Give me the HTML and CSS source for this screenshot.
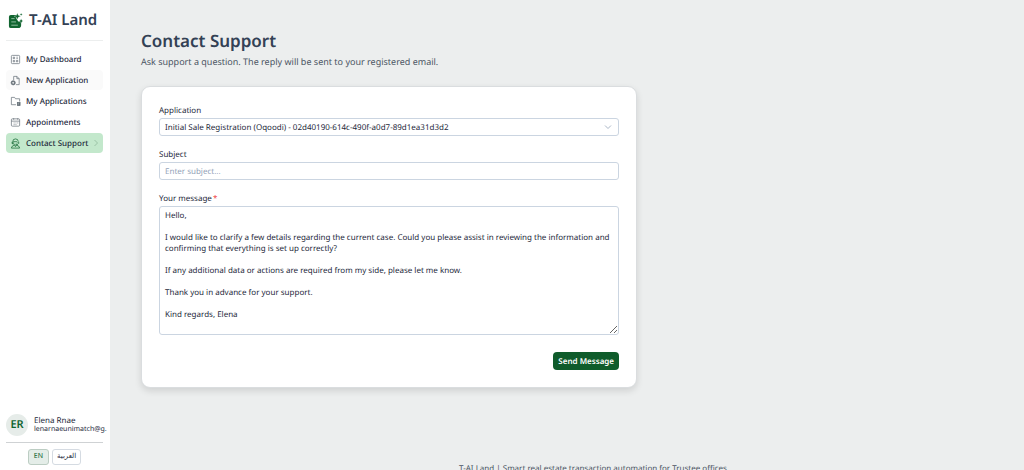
FILE: index.html
```html
<!DOCTYPE html>
<html lang="en">
<head>
<meta charset="utf-8">
<title>Contact Support - T-AI Land</title>
<link rel="stylesheet" href="styles.css">
</head>
<body>
<div class="app">
  <aside class="sidebar">
    <a class="brand" href="#">
      <svg class="brand-icon" viewBox="0 0 16 18" aria-hidden="true">
        <path d="M3 3h6v4l2 3h3v4q0 3-3 3H3q-2 0-2-2V5q0-2 2-2z" fill="#116530"/>
        <path d="M3.500 7H7M3.500 10.500h5M3.500 14h7" stroke="#b5d8c1" stroke-width=".8" fill="none"/>
        <path d="M10 1l1 2.500 2.500 1-2.500 1-1 2.500-1-2.500-2.500-1 2.500-1zM14 7l.8 1.700 1.200.8-1.200.8-.8 1.700-.8-1.700-1.200-.8 1.200-.8zM14 1l.5 1 1 .5-1 .5-.5 1-.5-1-1-.5 1-.5z" fill="#116530" stroke="#fff" stroke-width=".3"/>
      </svg>
      <span>T-AI Land</span>
    </a>
    <nav class="nav">
      <a class="nav-item" href="#">
        <svg class="icon" viewBox="0 0 12 12" aria-hidden="true"><rect x="1.500" y="1.500" width="9" height="9" rx="1"/><path d="M3.500 3.500h1.500v1.500H3.500zM7 3.500h1.500M7 5h1.500M3.500 7h1.500v1.500H3.500zM7 7h1.500v1.500H7z"/></svg>
        <span>My Dashboard</span>
      </a>
      <a class="nav-item hovered" href="#">
        <svg class="icon" viewBox="0 0 12 12" aria-hidden="true"><path d="M4 5.500v-4h3.500L10 4v6.500H6.500M7.500 1.500V4H10"/><circle cx="3.500" cy="8.500" r="2.300" fill="#59636b"/><path d="M3.500 7.300v2.400M2.300 8.500h2.400" stroke="#fff"/></svg>
        <span>New Application</span>
      </a>
      <a class="nav-item" href="#">
        <svg class="icon" viewBox="0 0 12 12" aria-hidden="true"><path d="M6.500 9.500h-5v-8H5L6 3h4.500v3"/><rect x="8" y="7" width="3" height="3.500" fill="#59636b"/><path d="M9 8h1M9 9h1" stroke="#fff" stroke-width=".5"/></svg>
        <span>My Applications</span>
      </a>
      <a class="nav-item" href="#">
        <svg class="icon" viewBox="0 0 12 12" aria-hidden="true"><rect x="1.500" y="2" width="9" height="8" rx="1"/><path d="M1.500 4.500h9M4 1.300V3M8.500 1.300V3M4 6.500h1M6 6.500h1M8 6.500h1M4 8.300h1M6 8.300h1"/></svg>
        <span>Appointments</span>
      </a>
      <a class="nav-item active" href="#" aria-current="page">
        <svg class="icon" viewBox="0 0 12 12" aria-hidden="true"><path d="M3 6V4q0-3 3-3t3 3M3.500 4h3q1.500 0 2 1M4 5v1q0 2 2 2t3-2M2.300 4.200v2h1M9.500 4.200v2M1.500 11q.3-2.500 3-3l1.500 1.500L7.500 8q2.700.5 3 3zM6 6.700h2"/></svg>
        <span>Contact Support</span>
        <svg class="chevron" viewBox="0 0 6 8" aria-hidden="true"><path d="M1.500 1L4.500 4 1.500 7"/></svg>
      </a>
    </nav>
    <div class="account">
      <div class="avatar">ER</div>
      <div class="identity">
        <div class="name">Elena Rnae</div>
        <div class="email">lenarnaeunimatch@g.</div>
      </div>
    </div>
    <div class="languages">
      <button class="lang selected" type="button">EN</button>
      <button class="lang" type="button" lang="ar">العربية</button>
    </div>
  </aside>
  <div class="page">
    <main class="content">
      <h1>Contact Support</h1>
      <p class="lead">Ask support a question. The reply will be sent to your registered email.</p>
      <form class="card">
        <div class="field">
          <label for="application">Application</label>
          <div class="select-wrap">
            <select class="control" id="application">
              <option>Initial Sale Registration (Oqoodi) - 02d40190-614c-490f-a0d7-89d1ea31d3d2</option>
            </select>
            <svg class="arrow" viewBox="0 0 8 6" aria-hidden="true"><path d="M1 1.500l3 3 3-3"/></svg>
          </div>
        </div>
        <div class="field">
          <label for="subject">Subject</label>
          <input class="control" id="subject" type="text" placeholder="Enter subject...">
        </div>
        <div class="field">
          <label for="message">Your message<span class="required">*</span></label>
          <textarea class="control message" id="message" rows="11" required>Hello,

I would like to clarify a few details regarding the current case. Could you please assist in reviewing the information and confirming that everything is set up correctly?

If any additional data or actions are required from my side, please let me know.

Thank you in advance for your support.

Kind regards, Elena</textarea>
        </div>
        <button class="send" type="button">Send Message</button>
      </form>
    </main>
    <footer class="footer">T-AI Land | Smart real estate transaction automation for Trustee offices</footer>
  </div>
</div>
</body>
</html>
```
FILE: styles.css
```css
* {
  box-sizing: border-box;
}

body {
  margin: 0;
  font: 8px/11px "Noto Sans", sans-serif;
  color: #1e293b;
  background: #eceeee;
  text-rendering: geometricPrecision;
}

button,
input,
select,
textarea {
  font: inherit;
  color: inherit;
  text-rendering: inherit;
}

a {
  color: inherit;
  text-decoration: none;
}

.app {
  display: flex;
  height: 100vh;
  overflow: hidden;
}

.sidebar {
  display: flex;
  flex-direction: column;
  flex: 0 0 110px;
  min-width: 0;
  padding: 0 7px 5px 6px;
  background: #fff;
}

.brand {
  display: flex;
  align-items: center;
  gap: 6px;
  height: 41px;
  padding: 1px 0 0 2px;
  border-bottom: 1px solid #eceeee;
  font-size: 15px;
  font-weight: 600;
  color: #334155;
  white-space: nowrap;
}

.brand-icon {
  width: 15px;
  height: 17px;
  flex: none;
}

.nav {
  display: flex;
  flex-direction: column;
  gap: 1px;
  padding-top: 8px;
}

.nav-item {
  display: flex;
  align-items: center;
  gap: 5px;
  height: 20px;
  padding: 0 6px 0 4px;
  border-radius: 4px;
  font-weight: 500;
  white-space: nowrap;
}

.nav-item.hovered {
  background: #fafafa;
}

.nav-item.active {
  background: #c3e8cc;
}

.icon {
  width: 11px;
  height: 11px;
  flex: none;
  fill: none;
  stroke: #69737b;
  stroke-width: 0.8;
}

.active .icon {
  stroke: #116530;
}

.chevron {
  width: 6px;
  height: 8px;
  flex: none;
  margin-left: auto;
  fill: none;
  stroke: #8fb99a;
  stroke-width: 0.8;
}

.account {
  display: flex;
  align-items: center;
  gap: 6px;
  margin-top: auto;
  padding-bottom: 6px;
  border-bottom: 1px solid #cfd2d4;
}

.avatar {
  flex: none;
  width: 22px;
  height: 22px;
  border-radius: 50%;
  background: #e6ece9;
  color: #116530;
  font-size: 11px;
  font-weight: 600;
  line-height: 22px;
  text-align: center;
}

.identity {
  min-width: 0;
  line-height: 9px;
}

.name {
  font-size: 8px;
}

.email {
  font-size: 7px;
  white-space: nowrap;
}

.languages {
  display: flex;
  justify-content: center;
  gap: 3px;
  padding-top: 6px;
}

.lang {
  height: 16px;
  padding: 0 4px;
  border: 1px solid #d5dbe2;
  border-radius: 3px;
  background: #fff;
  font-size: 7px;
  line-height: 14px;
}

.lang.selected {
  padding: 0 5px;
  border-color: #bccdc3;
  background: #e4ede8;
  color: #116530;
}

.page {
  flex: 1;
  min-width: 0;
  padding: 30px 31px 0;
}

.content {
  max-width: 496px;
}

h1 {
  margin: 0;
  font-size: 17px;
  font-weight: 600;
  line-height: 22px;
  color: #334155;
}

.lead {
  margin: 4px 0 18px;
  font-size: 9px;
  line-height: 12px;
  color: #4b5563;
}

.card {
  display: flex;
  flex-direction: column;
  gap: 13px;
  padding: 18px 17px 17px;
  border: 1px solid #dadddf;
  border-radius: 9px;
  background: #fff;
  box-shadow: 0 3px 7px rgba(0, 0, 0, 0.12);
}

.field {
  display: flex;
  flex-direction: column;
  gap: 2px;
}

.required {
  margin-left: 1px;
  color: #ef4444;
}

.control {
  width: 100%;
  height: 18px;
  margin: 0;
  padding: 0 5px;
  border: 1px solid #cbd5e1;
  border-radius: 3px;
  background: #fff;
  appearance: none;
}

.control::placeholder {
  color: #94a3b8;
}

.select-wrap {
  position: relative;
  display: flex;
}

.arrow {
  position: absolute;
  top: 6px;
  right: 7px;
  width: 8px;
  height: 6px;
  fill: none;
  stroke: #94a3b8;
  stroke-width: 0.8;
  pointer-events: none;
}

.message {
  display: block;
  height: auto;
  padding: 3px 5px;
  resize: vertical;
}

.send {
  align-self: flex-end;
  height: 18px;
  margin-top: 4px;
  padding: 0 5px;
  border: 0;
  border-radius: 4px;
  background: #0f5c2b;
  color: #fff;
  font-weight: 600;
}

.footer {
  padding: 75px 0 0 52px;
  color: #4b5563;
  text-align: center;
}
```
